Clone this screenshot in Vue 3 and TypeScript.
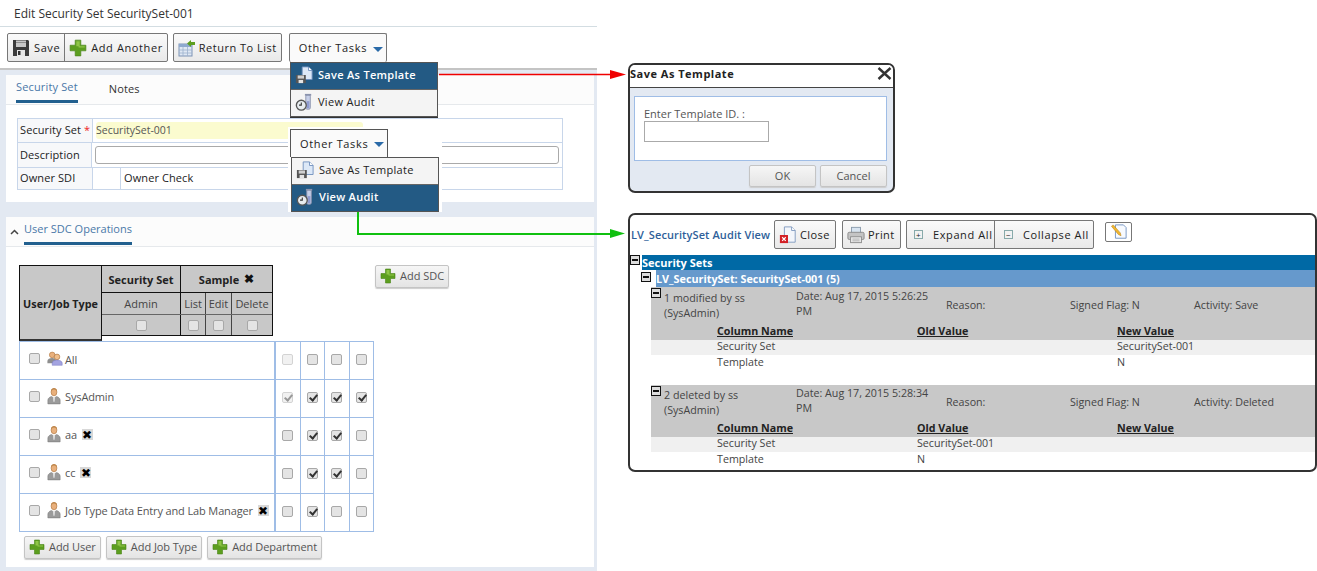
<script setup lang="ts">
interface UserRow {
  name: string
  removable: boolean
  checks: boolean[]
  group?: boolean
}

const users: UserRow[] = [
  { name: 'All', removable: false, checks: [false, false, false, false], group: true },
  { name: 'SysAdmin', removable: false, checks: [true, true, true, true] },
  { name: 'aa', removable: true, checks: [false, true, true, false] },
  { name: 'cc', removable: true, checks: [false, true, true, false] },
  { name: 'Job Type Data Entry and Lab Manager', removable: true, checks: [false, true, false, false] }
]

const audits = [
  {
    who: '1 modified by ss (SysAdmin)',
    date: 'Date: Aug 17, 2015 5:26:25 PM',
    activity: 'Activity: Save',
    rows: [
      { col: 'Security Set', oldVal: '', newVal: 'SecuritySet-001' },
      { col: 'Template', oldVal: '', newVal: 'N' }
    ]
  },
  {
    who: '2 deleted by ss (SysAdmin)',
    date: 'Date: Aug 17, 2015 5:28:34 PM',
    activity: 'Activity: Deleted',
    rows: [
      { col: 'Security Set', oldVal: 'SecuritySet-001', newVal: '' },
      { col: 'Template', oldVal: 'N', newVal: '' }
    ]
  }
]
</script>

<template>
  <div class="canvas">
    <svg class="defs" width="0" height="0">
      <defs>
        <symbol id="i-save" viewBox="0 0 18 18">
          <path d="M1 1h15l1 1v15H1z" fill="#3c3c3c" />
          <rect x="4" y="1.500" width="10" height="6.500" fill="#c9c9c9" />
          <rect x="4" y="3" width="10" height="1" fill="#8f8f8f" />
          <rect x="5" y="11" width="8" height="6" fill="#e6e6e6" />
          <rect x="6" y="12" width="2.500" height="4" fill="#333" />
        </symbol>
        <symbol id="i-plus" viewBox="0 0 16 16">
          <path d="M5.500 1h5v4.500H15v5h-4.500V15h-5v-4.500H1v-5h4.500z" fill="#5c9e1f" stroke="#4a8518" stroke-width=".6" />
          <path d="M6.500 2h3v4.500H14v1H8.500V6.500h-2z" fill="#8fc548" />
        </symbol>
        <symbol id="i-return" viewBox="0 0 18 18">
          <rect x="1" y="5" width="13" height="12" fill="#dfe8f4" stroke="#7c93b5" />
          <path d="M1 5h13v3H1z" fill="#8ea9cf" />
          <path d="M1 11h13M1 14h13M5 8v9M9.500 8v9" stroke="#9db1cd" stroke-width=".8" />
          <path d="M9 4.500L13 1v2h4v3h-4v2z" fill="#5c9e1f" />
        </symbol>
        <symbol id="i-tpl" viewBox="0 0 20 20">
          <path d="M8 1h7l4 4v10H8z" fill="#dce8f7" stroke="#6f90bd" />
          <path d="M15 1v4h4" fill="#fff" stroke="#6f90bd" />
          <path d="M1 10h11v9H1z" fill="#555" />
          <rect x="3" y="10.500" width="7" height="3.500" fill="#cfcfcf" />
          <rect x="4" y="15.500" width="5" height="3.500" fill="#e4e4e4" />
        </symbol>
        <symbol id="i-audit" viewBox="0 0 20 20">
          <rect x="12" y="2" width="5" height="16" rx="1.500" fill="#c6cfe8" stroke="#8a93ad" />
          <rect x="11" y="1" width="7" height="2" fill="#8a93ad" />
          <rect x="13" y="9" width="3" height="8" fill="#8f9bd0" />
          <circle cx="7" cy="13.500" r="5.500" fill="#e7ecef" stroke="#555" stroke-width="1.500" />
          <path d="M7 10.500v3H4.500" fill="none" stroke="#333" stroke-width="1.200" />
        </symbol>
        <symbol id="i-person" viewBox="0 0 16 20">
          <ellipse cx="8" cy="5.500" rx="3.300" ry="4.300" fill="#e9b07c" stroke="#b37a45" stroke-width=".8" />
          <path d="M4.700 4.500Q8 .5 11.300 4.500L11 2.500 8 .8 5 2.500z" fill="#c08a4f" />
          <path d="M1 19v-4.500c0-2 2.500-3.500 4-4l3 2 3-2c1.500.5 4 2 4 4V19z" fill="#9b9b9b" stroke="#777" stroke-width=".6" />
          <path d="M7 11.500h2l-.4 5h-1.200z" fill="#eeeeee" />
        </symbol>
        <symbol id="i-group" viewBox="0 0 20 18">
          <circle cx="6.500" cy="4.500" r="3.500" fill="#e9b07c" stroke="#b37a45" stroke-width=".8" />
          <path d="M0.500 15v-3c0-2 3-3.500 6-3.500s5 1.500 5 3.500v3z" fill="#8e8e8e" />
          <circle cx="12.500" cy="7" r="3.500" fill="#f0be8a" stroke="#a86f3a" stroke-width=".8" />
          <path d="M6.500 17.500v-3c0-2 3-3.500 6-3.500s6.500 1.500 6.500 3.500v3z" fill="#a3a3e0" stroke="#7676c0" stroke-width=".6" />
        </symbol>
        <symbol id="i-close" viewBox="0 0 20 20">
          <path d="M6 1h8l4 4v13H6z" fill="#f3f6fb" stroke="#7d97bd" />
          <path d="M14 1v4h4" fill="#fff" stroke="#7d97bd" />
          <rect x="1" y="10" width="9" height="9" fill="#d32026" />
          <path d="M3.500 12.500l4 4m0-4l-4 4" stroke="#fff" stroke-width="1.300" />
        </symbol>
        <symbol id="i-print" viewBox="0 0 20 20">
          <rect x="5" y="1.500" width="10" height="7" fill="#d8e4f0" stroke="#89a" />
          <rect x="1" y="7" width="18" height="8" rx="1.500" fill="#c4c4c4" stroke="#888" />
          <rect x="4" y="12" width="12" height="6.500" fill="#ececec" stroke="#888" />
          <path d="M6 14.500h8M6 16.500h8" stroke="#aaa" />
        </symbol>
        <symbol id="i-note" viewBox="0 0 20 18">
          <path d="M6 1h9l3 3v12H6z" fill="#f7faff" stroke="#6d8fbf" />
          <path d="M1.500 2.500l2-1.500 8 9 .8 3.200-3-1.400z" fill="#f0b72f" stroke="#b67f1a" stroke-width=".6" />
        </symbol>
      </defs>
    </svg>

    <!-- left page -->
    <div class="page">
      <div class="page-title">Edit Security Set SecuritySet-001</div>
      <div class="toolbar">
        <div class="btn-group">
          <button class="tool"><svg class="ic18"><use href="#i-save" /></svg>Save</button>
          <button class="tool"><svg class="ic18"><use href="#i-plus" /></svg>Add Another</button>
        </div>
        <div class="btn-group">
          <button class="tool"><svg class="ic18"><use href="#i-return" /></svg>Return To List</button>
        </div>
        <div class="btn-group tasks">
          <button class="tool tasks-btn">Other Tasks<span class="caret"></span></button>
        </div>
      </div>

      <div class="work">
        <section class="card first">
          <div class="tabs">
            <span class="tab active">Security Set</span>
            <span class="tab">Notes</span>
          </div>
          <div class="form-table">
            <div class="f-row">
              <div class="f-label">Security Set <em>*</em></div>
              <div class="f-cell"><div class="f-yellow">SecuritySet-001</div></div>
            </div>
            <div class="f-row">
              <div class="f-label">Description</div>
              <div class="f-cell"><div class="f-input"></div></div>
            </div>
            <div class="f-row last">
              <div class="f-label">Owner SDI</div>
              <div class="f-small"></div>
              <div class="f-label plain">Owner Check</div>
            </div>
          </div>
        </section>

        <section class="card second">
          <div class="section-head">
            <svg class="chev" width="9" height="6" viewBox="0 0 9 6"><path d="M1 5l3.500-3.500L8 5" fill="none" stroke="#444" stroke-width="1.500" /></svg>
            <span class="tab active">User SDC Operations</span>
          </div>

          <div class="matrix-top">
            <div class="matrix-head">
              <div class="mh-user">User/Job Type</div>
              <div class="mh-grid">
                <div class="mh-row tall">
                  <div class="mc w80 bold">Security Set</div>
                  <div class="mc w91 bold">Sample <span class="x-plain">✖</span></div>
                </div>
                <div class="mh-row mid">
                  <div class="mc w80">Admin</div>
                  <div class="mc w24">List</div>
                  <div class="mc w25">Edit</div>
                  <div class="mc w42">Delete</div>
                </div>
                <div class="mh-row low">
                  <div class="mc w80"><span class="cb"></span></div>
                  <div class="mc w24"><span class="cb"></span></div>
                  <div class="mc w25"><span class="cb"></span></div>
                  <div class="mc w42"><span class="cb"></span></div>
                </div>
              </div>
            </div>
            <button class="light add-sdc"><svg class="ic16"><use href="#i-plus" /></svg>Add SDC</button>
          </div>

          <div class="user-table">
            <div v-for="u in users" :key="u.name" class="u-row">
              <div class="u-name">
                <span class="cb"></span>
                <svg v-if="u.group" class="ic-person group"><use href="#i-group" /></svg>
                <svg v-else class="ic-person"><use href="#i-person" /></svg>
                <span class="u-text">{{ u.name }}</span>
                <span v-if="u.removable" class="x-box">✖</span>
              </div>
              <div v-for="(c, i) in u.checks" :key="i" class="u-check">
                <span class="cb" :class="{ on: c, faint: i === 0 && (u.name === 'All' || u.name === 'SysAdmin') }"></span>
              </div>
            </div>
          </div>

          <div class="add-row">
            <button class="light"><svg class="ic16"><use href="#i-plus" /></svg>Add User</button>
            <button class="light"><svg class="ic16"><use href="#i-plus" /></svg>Add Job Type</button>
            <button class="light"><svg class="ic16"><use href="#i-plus" /></svg>Add Department</button>
          </div>
        </section>
      </div>
    </div>

    <!-- dropdown, first state -->
    <div class="menu menu-a">
      <div class="menu-item selected"><svg class="ic18"><use href="#i-tpl" /></svg>Save As Template</div>
      <div class="menu-item"><svg class="ic18"><use href="#i-audit" /></svg>View Audit</div>
    </div>

    <!-- dropdown, second state -->
    <div class="menu-b">
      <div class="tasks-b"><button class="tool tasks-btn">Other Tasks<span class="caret"></span></button></div>
      <div class="menu">
        <div class="menu-item"><svg class="ic18"><use href="#i-tpl" /></svg>Save As Template</div>
        <div class="menu-item selected"><svg class="ic18"><use href="#i-audit" /></svg>View Audit</div>
      </div>
    </div>

    <!-- callout arrows -->
    <svg class="arrows" width="1317" height="571">
      <path d="M439 74.500H612" stroke="#f00000" stroke-width="1.500" fill="none" />
      <path d="M626 74.500L610 70v9z" fill="#f00000" />
      <path d="M358 212V234H612" stroke="#10c010" stroke-width="2" fill="none" />
      <path d="M625 233.500L610 229v9z" fill="#10c010" />
    </svg>

    <!-- save as template dialog -->
    <div class="dialog">
      <div class="dlg-head">
        <span>Save As Template</span>
        <svg width="15" height="13" viewBox="0 0 15 13"><path d="M1.500 1l12 11M13.500 1l-12 11" stroke="#333" stroke-width="2.400" /></svg>
      </div>
      <div class="dlg-body">
        <div class="dlg-panel">
          <label>Enter Template ID. :</label>
          <div class="dlg-input"></div>
        </div>
        <div class="dlg-actions">
          <button class="light plain-btn">OK</button>
          <button class="light plain-btn">Cancel</button>
        </div>
      </div>
    </div>

    <!-- audit view -->
    <div class="audit">
      <div class="audit-bar">
        <span class="audit-title">LV_SecuritySet Audit View</span>
        <div class="btn-group a-close"><button class="tool"><svg class="ic18"><use href="#i-close" /></svg>Close</button></div>
        <div class="btn-group a-print"><button class="tool"><svg class="ic18"><use href="#i-print" /></svg>Print</button></div>
        <div class="btn-group a-expand">
          <button class="tool"><span class="box-ic">+</span>Expand All</button>
          <button class="tool"><span class="box-ic">−</span>Collapse All</button>
        </div>
        <div class="note-btn"><svg width="18" height="16"><use href="#i-note" /></svg></div>
      </div>
      <div class="tree-1">
        <span class="minus"></span>
        <div class="bar-1">Security Sets</div>
      </div>
      <div class="tree-2">
        <span class="minus"></span>
        <div class="bar-2">LV_SecuritySet: SecuritySet-001 (5)</div>
      </div>
      <div v-for="a in audits" :key="a.who" class="entry">
        <div class="entry-gray">
          <div class="entry-info">
            <span class="minus entry-minus"></span>
            <div class="e-who">{{ a.who }}</div>
            <div class="e-date">{{ a.date }}</div>
            <div class="e-reason">Reason:</div>
            <div class="e-flag">Signed Flag: N</div>
            <div class="e-act">{{ a.activity }}</div>
          </div>
          <div class="line heads">
            <span>Column Name</span><span>Old Value</span><span>New Value</span>
          </div>
        </div>
        <div v-for="(r, i) in a.rows" :key="r.col" class="line" :class="{ shade: i === 0 }">
          <span>{{ r.col }}</span><span>{{ r.oldVal }}</span><span>{{ r.newVal }}</span>
        </div>
      </div>
    </div>
  </div>
</template>

<style scoped>
.canvas {
  position: relative;
  width: 1317px;
  height: 571px;
  overflow: hidden;
  background: #fff;
  font-family: "Open Sans", sans-serif;
  font-size: 11px;
  color: #333;
}
.defs {
  position: absolute;
}
button {
  font-family: inherit;
  margin: 0;
}
.ic18 {
  width: 18px;
  height: 18px;
  flex: none;
}
.ic16 {
  width: 16px;
  height: 16px;
  flex: none;
}

/* page */
.page {
  width: 597px;
}
.page-title {
  height: 26px;
  line-height: 28px;
  padding-left: 14px;
  font-size: 12px;
  color: #333;
  border-bottom: 1px solid #d3dde2;
}
.toolbar {
  display: flex;
  gap: 5px;
  height: 43px;
  box-sizing: border-box;
  padding: 6px 0 0 7px;
  border-bottom: 2px solid #c4c4c4;
}
.btn-group {
  display: flex;
  height: 29px;
  border: 1px solid #777;
  border-radius: 2px;
  box-sizing: border-box;
  background: linear-gradient(#fafafa, #e9e9e9);
}
.tool {
  display: flex;
  align-items: center;
  gap: 4px;
  height: 100%;
  padding: 0 4px;
  border: none;
  border-left: 1px solid #777;
  background: none;
  font-size: 11px;
  letter-spacing: .6px;
  white-space: nowrap;
  color: #222;
}
.tool:first-child {
  border-left: none;
}
.toolbar .btn-group:nth-child(2) .tool {
  gap: 3px;
  letter-spacing: .5px;
}
.tasks {
  margin-left: 2px;
  border-bottom: none;
  height: 29px;
  background: #fafafa;
}
.tasks-btn {
  gap: 6px;
  padding: 0 3px 1px 9px;
  letter-spacing: .65px;
}
.tasks-b .tasks-btn {
  width: 96px;
  padding-right: 0;
}
.caret {
  position: relative;
  top: 1.500px;
  width: 0;
  height: 0;
  border-left: 5.500px solid transparent;
  border-right: 5.500px solid transparent;
  border-top: 5.500px solid #2a6aa8;
}
.work {
  height: 501px;
  box-sizing: border-box;
  padding: 5px 3px 3px 6px;
  background: #e3e9f2;
  display: flex;
  flex-direction: column;
  gap: 15px;
}
.card {
  background: #fff;
}
.card.first {
  height: 127px;
}
.card.second {
  height: 350px;
}
.tabs {
  display: flex;
  height: 29px;
  padding-left: 10px;
  gap: 31px;
  background: #fcfcfc;
  border-bottom: 1px solid #e6e9ec;
}
.tab {
  box-sizing: border-box;
  height: 28px;
  line-height: 23px;
  font-size: 11px;
  letter-spacing: .15px;
  color: #333;
}
.tab:not(.active) {
  padding-top: 2px;
}
.tab.active {
  color: #4a78a8;
  border-bottom: 3px solid #22608f;
}
.section-head .tab {
  letter-spacing: 0;
}
.form-table {
  margin: 13px 0 0 11px;
  width: 546px;
  box-sizing: border-box;
  border: 1px solid #c8d6ea;
  background: #fff;
  color: #222;
}
.f-row {
  display: flex;
  box-sizing: border-box;
  height: 24px;
  border-bottom: 1px solid #c8d6ea;
}
.f-row + .f-row {
  height: 25px;
}
.f-row.last {
  height: 21px;
  border-bottom: none;
}
.f-label {
  width: 75px;
  box-sizing: border-box;
  padding-left: 2px;
  line-height: 22px;
  background: #f7f8fa;
  border-right: 1px solid #c8d6ea;
  letter-spacing: .1px;
}
.f-row + .f-row .f-label {
  line-height: 24px;
}
.f-row.last .f-label {
  line-height: 20px;
}
.f-label em {
  color: #e22;
  font-style: normal;
}
.f-label.plain {
  width: auto;
  padding-left: 3px;
  border: none;
  background: none;
}
.f-cell {
  padding: 3px 3px;
  flex: 1;
}
.f-yellow {
  width: 267px;
  height: 17px;
  line-height: 16px;
  background: #fbfbcf;
  border-radius: 3px;
  font-size: 10.500px;
  color: #555;
}
.f-input {
  width: 464px;
  height: 18px;
  box-sizing: border-box;
  border: 1px solid #aaa;
  border-radius: 3px;
}
.f-small {
  width: 27px;
  border-right: 1px solid #c8d6ea;
}
.section-head {
  display: flex;
  align-items: flex-start;
  height: 29px;
  gap: 5px;
  padding-left: 4px;
  background: #fcfcfc;
  border-bottom: 1px solid #e6e9ec;
}
.chev {
  margin-top: 12px;
}
.matrix-top {
  position: relative;
  display: flex;
  margin: 18px 0 0 13px;
  gap: 102px;
  align-items: flex-start;
}
.matrix-head {
  display: flex;
  height: 76px;
}
.mh-user {
  width: 83px;
  height: 76px;
  box-sizing: border-box;
  border: 1px solid #111;
  border-bottom: 2px solid #333;
  background: #c8c8c8;
  font-weight: 700;
  font-size: 10.800px;
  line-height: 76px;
  text-align: center;
  color: #222;
  white-space: nowrap;
}
.mh-grid {
  border: 1px solid #111;
  border-left: none;
  background: #c8c8c8;
  height: 71px;
  box-sizing: border-box;
  width: 171px;
}
.mh-row {
  display: flex;
}
.mh-row.tall {
  height: 26px;
  border-bottom: 1px solid #111;
}
.mh-row.mid {
  height: 21px;
  border-bottom: 1px solid #666;
}
.mh-row.low {
  height: 20px;
}
.mc {
  display: flex;
  align-items: center;
  justify-content: center;
  box-sizing: border-box;
  border-right: 1px solid #444;
  color: #444;
  white-space: nowrap;
}
.mc:last-child {
  border-right: none;
}
.mh-row .w80 {
  width: 79px;
  border-right-color: #111;
}
.w91 {
  width: 91px;
}
.w24 {
  width: 25px;
}
.w25 {
  width: 26px;
}
.w42 {
  width: 40px;
}
.bold {
  font-weight: 700;
  color: #222;
}
.x-plain {
  margin-left: 5px;
  font-size: 12px;
  line-height: 10px;
  color: #111;
}
.light {
  display: inline-flex;
  align-items: center;
  gap: 4px;
  height: 23px;
  padding: 0 4px 2px;
  box-sizing: border-box;
  border: 1px solid #c4c4c4;
  border-radius: 2px;
  background: linear-gradient(#f6f6f6, #e4e4e4);
  font-size: 11px;
  color: #555;
  box-shadow: 0 1px 1px #ccc;
}
.cb {
  position: relative;
  display: inline-block;
  width: 11px;
  height: 11px;
  flex: none;
  box-sizing: border-box;
  border: 1px solid #a8a8a8;
  border-radius: 2px;
  background: #e4e4e4;
}
.cb.faint {
  opacity: .5;
}
.cb.on::after {
  content: "";
  position: absolute;
  left: 3px;
  top: 0;
  width: 3px;
  height: 6px;
  border: solid #333;
  border-width: 0 2px 2px 0;
  transform: rotate(40deg);
}
.user-table {
  width: 355px;
  margin: 0 0 0 13px;
  border-top: 1px solid #9fbde6;
  border-left: 1px solid #9fbde6;
  box-sizing: border-box;
}
.u-row {
  display: grid;
  grid-template-columns: 256px 24.500px 24px 25px 24.500px;
  height: 38px;
  box-sizing: border-box;
  border-bottom: 1px solid #9fbde6;
}
.u-name {
  display: flex;
  align-items: center;
  padding: 0 0 5px 9px;
  border-right: 2px solid #9fbde6;
  box-sizing: border-box;
  white-space: nowrap;
}
.ic-person {
  width: 14px;
  height: 18px;
  margin-left: 7px;
}
.ic-person.group {
  width: 16px;
  height: 15px;
  margin-right: -2px;
}
.u-text {
  margin-left: 4px;
  margin-top: 1px;
  color: #555;
  letter-spacing: -.13px;
}
.group + .u-text {
  margin-top: 3px;
}
.x-box {
  margin-left: 5px;
  width: 11px;
  height: 11px;
  line-height: 11px;
  text-align: center;
  font-size: 12px;
  color: #000;
  background: #d8d8d8;
}
.u-check {
  display: flex;
  align-items: center;
  justify-content: center;
  padding-bottom: 2px;
  border-right: 1px solid #9fbde6;
}
.add-row {
  display: flex;
  gap: 5px;
  margin: 4px 0 0 18px;
}
.add-row .light {
  letter-spacing: -.05px;
}

/* menus */
.menu {
  width: 148px;
  box-sizing: border-box;
  border: 1px solid #555;
  background: #f4f4f4;
}
.menu-a {
  position: absolute;
  left: 290px;
  top: 62px;
  box-shadow: 0 1px 0 #333;
}
.menu-b {
  position: absolute;
  left: 288px;
  top: 127px;
  width: 154px;
  height: 85px;
  box-sizing: border-box;
  padding: 2px 0 0 2px;
  background: #fff;
}
.menu-b .menu {
  margin-left: 1px;
}
.tasks-b {
  width: 98px;
  height: 28px;
  box-sizing: border-box;
  border: 1px solid #555;
  border-bottom: none;
  background: #fafafa;
}
.menu-item {
  display: flex;
  align-items: center;
  gap: 5px;
  height: 23px;
  padding: 0 0 3px 4px;
  border-bottom: 1px solid #666;
  font-size: 11px;
  line-height: 22px;
  letter-spacing: .3px;
  color: #222;
}
.menu-item:last-child {
  border-bottom: none;
}
.menu-item.selected {
  background: #235a84;
  color: #fff;
  font-weight: 600;
}
.arrows {
  position: absolute;
  left: 0;
  top: 0;
  pointer-events: none;
}

/* dialog */
.dialog {
  position: absolute;
  left: 628px;
  top: 63px;
  width: 267px;
  height: 130px;
  box-sizing: border-box;
  border: 2px solid #333;
  border-radius: 7px;
  overflow: hidden;
  background: #e3e9f2;
}
.dlg-head {
  display: flex;
  justify-content: space-between;
  align-items: flex-start;
  height: 22px;
  line-height: 18px;
  padding: 0 1px 0 0;
  background: #fff;
  border-bottom: 1px solid #444;
  font-weight: 700;
  font-size: 11px;
  letter-spacing: .5px;
  color: #222;
}
.dlg-head svg {
  margin-top: 2px;
}
.dlg-body {
  padding: 8px 6px 0 4px;
}
.dlg-panel {
  height: 65px;
  box-sizing: border-box;
  padding: 9px 9px;
  background: #fff;
  border: 1px solid #9fbde6;
}
.dlg-panel label {
  display: block;
  height: 15px;
  line-height: 15px;
  color: #555;
}
.dlg-input {
  width: 125px;
  height: 21px;
  box-sizing: border-box;
  border: 1px solid #aaa;
}
.dlg-actions {
  display: flex;
  justify-content: flex-end;
  gap: 4px;
  margin-top: 4px;
}
.plain-btn {
  width: 67px;
  height: 22px;
  justify-content: center;
}

/* audit */
.audit {
  position: absolute;
  left: 628px;
  top: 213px;
  width: 689px;
  height: 259px;
  box-sizing: border-box;
  border: 2px solid #333;
  border-radius: 7px;
  overflow: hidden;
  background: #fff;
}
.audit-bar {
  display: flex;
  align-items: flex-start;
  height: 40px;
  padding-top: 5px;
  box-sizing: border-box;
}
.audit-title {
  margin: 7px 0 0 1px;
  width: 143px;
  font-size: 11px;
  font-weight: 600;
  letter-spacing: .1px;
  color: #2f5f9a;
  white-space: nowrap;
}
.a-close {
  width: 62px;
}
.a-close .tool,
.a-print .tool {
  gap: 3px;
  letter-spacing: .4px;
}
.a-print {
  width: 59px;
  margin-left: 6px;
}
.a-expand {
  margin-left: 5px;
  width: 188px;
}
.a-expand .tool {
  gap: 10px;
  padding: 0 0 0 7px;
  flex: none;
}
.a-expand .tool:first-child {
  width: 87px;
}
.a-expand .tool:last-child {
  padding-left: 9px;
}
.box-ic {
  width: 9px;
  height: 9px;
  box-sizing: border-box;
  border: 1px solid #8aa;
  font-size: 8px;
  line-height: 7px;
  text-align: center;
  background: #f2f2f2;
}
.note-btn {
  margin: 2px 0 0 11px;
  width: 27px;
  height: 20px;
  box-sizing: border-box;
  border: 1px solid #777;
  border-radius: 2px;
  display: flex;
  justify-content: center;
  align-items: center;
}
.minus {
  position: relative;
  display: block;
  width: 10px;
  height: 10px;
  box-sizing: border-box;
  border: 1.500px solid #111;
  background: #ddd;
}
.minus::after {
  content: "";
  position: absolute;
  left: 1px;
  right: 1px;
  top: 2.500px;
  height: 2px;
  background: #111;
}
.tree-1,
.tree-2 {
  position: relative;
  display: flex;
  align-items: flex-start;
  font-weight: 700;
  color: #fff;
}
.tree-1 {
  gap: 2px;
}
.bar-1 {
  flex: 1;
  height: 15px;
  line-height: 15px;
  background: #0069a5;
}
.tree-2 {
  padding-left: 11px;
  gap: 5px;
}
.tree-2 .minus {
  margin-top: 2px;
}
.bar-2 {
  flex: 1;
  height: 17px;
  line-height: 17px;
  font-size: 10.800px;
  background: #6699cc;
}
.entry {
  margin-left: 21px;
  margin-bottom: 15px;
}
.entry-gray {
  background: #c8c8c8;
}
.entry-info {
  position: relative;
  height: 38px;
  color: #444;
  font-size: 10.700px;
  line-height: 15px;
}
.entry + .entry .entry-info {
  height: 37px;
}
.entry-minus {
  position: absolute;
  left: 0;
  top: 1px;
}
.entry-info > div {
  position: absolute;
}
.e-who {
  left: 13px;
  top: 4px;
  width: 110px;
}
.e-date {
  left: 145px;
  top: 2px;
  width: 140px;
}
.e-reason {
  left: 295px;
  top: 11px;
}
.e-flag {
  left: 419px;
  top: 11px;
}
.e-act {
  left: 543px;
  top: 11px;
}
.entry + .entry .e-who {
  top: 3px;
}
.entry + .entry .e-date {
  top: 1px;
}
.entry + .entry .e-reason,
.entry + .entry .e-flag,
.entry + .entry .e-act {
  top: 10px;
}
.line {
  display: grid;
  grid-template-columns: 200px 200px 1fr;
  height: 15px;
  line-height: 15px;
  padding-left: 66px;
  font-size: 10.700px;
  color: #444;
}
.line.shade {
  background: #f0f0f0;
  line-height: 13px;
}
.line.heads {
  line-height: 13px;
  font-weight: 700;
  color: #222;
  text-decoration: underline;
}
</style>
<style>
body {
  background: #fff;
}
</style>
